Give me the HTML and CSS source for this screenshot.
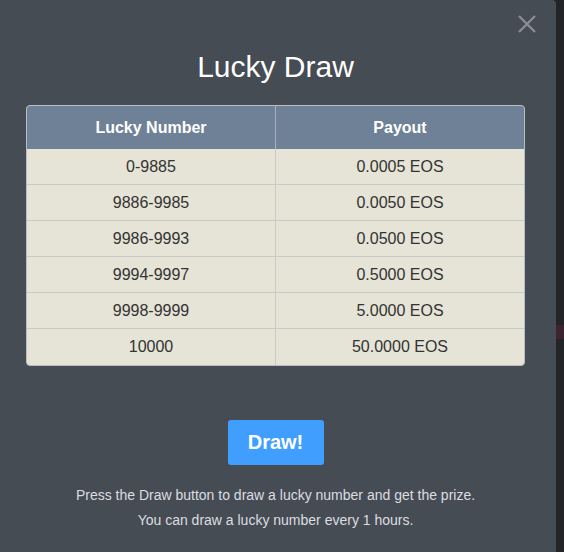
FILE: index.html
```html
<!DOCTYPE html>
<html>
<head>
<meta charset="utf-8">
<link rel="stylesheet" href="styles.css">
</head>
<body>
<div class="page">
  <div class="modal">
    <button class="close" aria-label="Close">
      <svg width="18" height="18" viewBox="0 0 18 18"><path d="M1 1L17 17M17 1L1 17" stroke="#8b9097" stroke-width="2.2" fill="none"/></svg>
    </button>
    <h1 class="title">Lucky Draw</h1>
    <div class="table-wrap">
      <table class="prize-table">
        <thead>
          <tr><th>Lucky Number</th><th>Payout</th></tr>
        </thead>
        <tbody>
          <tr><td>0-9885</td><td>0.0005 EOS</td></tr>
          <tr><td>9886-9985</td><td>0.0050 EOS</td></tr>
          <tr><td>9986-9993</td><td>0.0500 EOS</td></tr>
          <tr><td>9994-9997</td><td>0.5000 EOS</td></tr>
          <tr><td>9998-9999</td><td>5.0000 EOS</td></tr>
          <tr><td>10000</td><td>50.0000 EOS</td></tr>
        </tbody>
      </table>
    </div>
    <div class="actions">
      <button class="draw-btn">Draw!</button>
    </div>
    <p class="note">Press the Draw button to draw a lucky number and get the prize.</p>
    <p class="note">You can draw a lucky number every 1 hours.</p>
  </div>
  <div class="backdrop">
    <div class="spot"></div>
  </div>
</div>
</body>
</html>
```

FILE: styles.css
```css
html, body {
  margin: 0;
  padding: 0;
  background: #222427;
  font-family: "Liberation Sans", Arial, sans-serif;
  overflow: hidden;
}
.page {
  display: flex;
  width: 564px;
  height: 552px;
}
.modal {
  position: relative;
  width: 556px;
  flex: none;
  box-sizing: border-box;
  height: 552px;
  background: #464c54;
  border-radius: 0 4px 0 0;
  padding: 50px 31px 0 26px;
}
.backdrop {
  flex: 1;
  padding-top: 325px;
}
.spot {
  height: 14px;
  background: #3b242d;
}
.close {
  position: absolute;
  top: 15px;
  right: 20px;
  width: 18px;
  height: 18px;
  padding: 0;
  border: 0;
  background: none;
  display: block;
}
.close svg { display: block; }
.title {
  margin: 0;
  text-align: center;
  font-size: 30px;
  font-weight: normal;
  line-height: 34px;
  color: #ffffff;
}
.table-wrap {
  margin-top: 21px;
  border: 1px solid #b9bec4;
  border-radius: 4px;
  overflow: hidden;
  background: #e5e4d6;
}
.prize-table {
  width: 100%;
  border-collapse: collapse;
  table-layout: fixed;
}
.prize-table th {
  background: #6e8196;
  color: #ffffff;
  font-size: 16px;
  font-weight: bold;
  height: 43px;
  padding: 0;
  text-align: center;
}
.prize-table th + th {
  border-left: 1px solid #a5b0bc;
}
.prize-table td {
  height: 35px;
  padding: 0;
  text-align: center;
  font-size: 16px;
  color: #333333;
  border-bottom: 1px solid #c9c9c6;
}
.prize-table tr:last-child td {
  border-bottom: 0;
  height: 36px;
}
.prize-table td + td {
  border-left: 1px solid #c9c9c6;
}
.actions {
  display: flex;
  justify-content: center;
  margin-top: 54px;
}
.draw-btn {
  width: 96px;
  height: 45px;
  border: 0;
  border-radius: 3px;
  background: #409eff;
  color: #ffffff;
  font-family: "Liberation Sans", Arial, sans-serif;
  font-size: 20px;
  font-weight: bold;
  padding: 0;
}
.note {
  margin: 0;
  text-align: center;
  font-size: 14px;
  line-height: 25px;
  color: #dcdde0;
}
.actions + .note {
  margin-top: 18px;
}
```
